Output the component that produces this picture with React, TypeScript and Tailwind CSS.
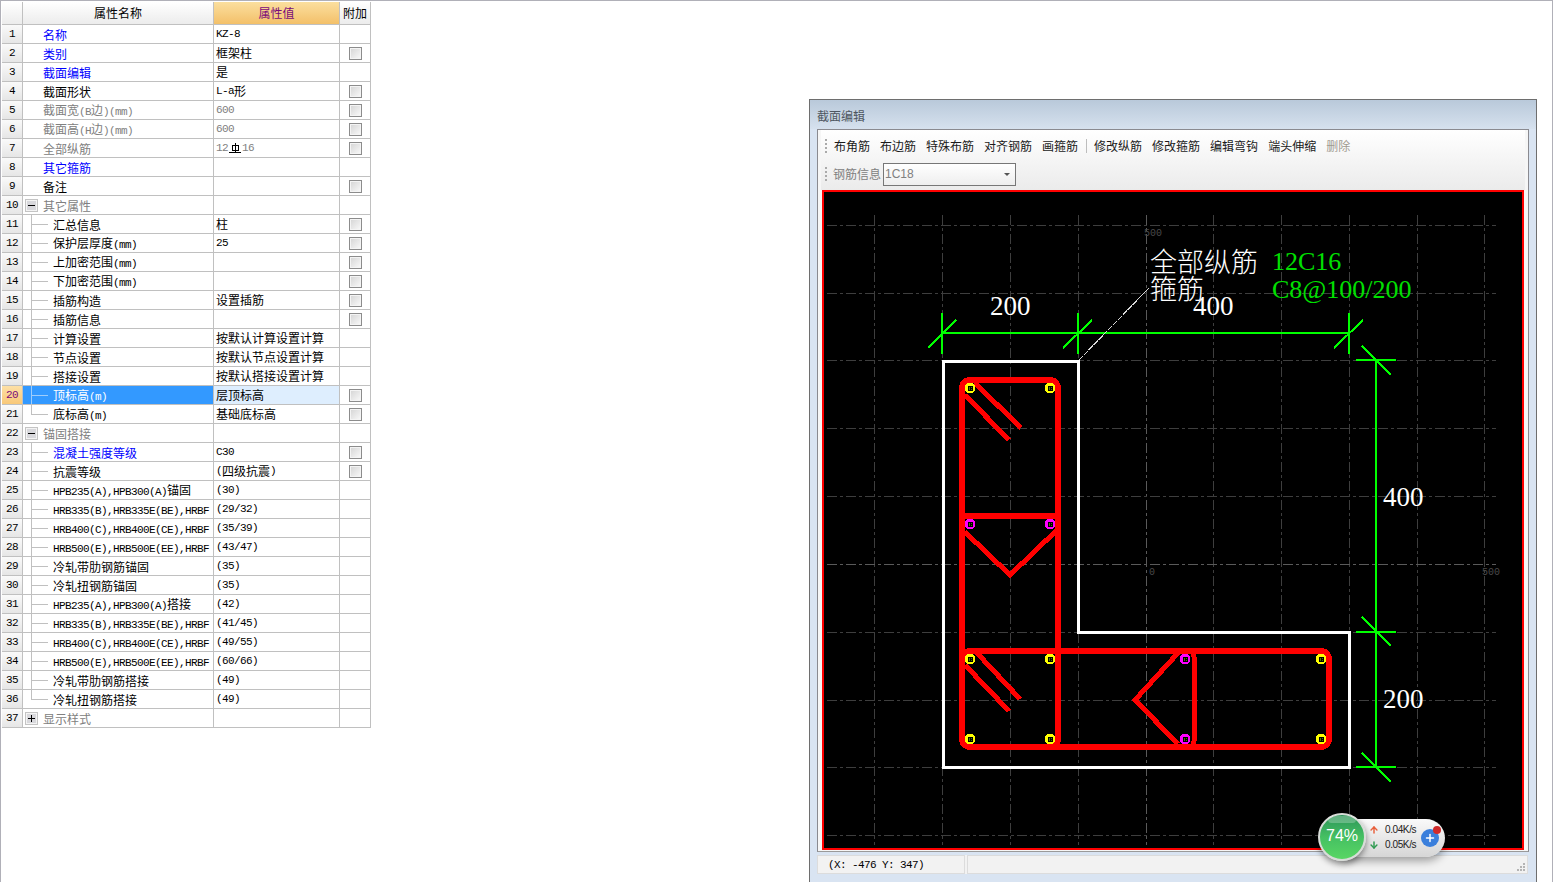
import { ArrowDown, ArrowUp, Plus } from "lucide-react"

interface Row {
    name: string
    value?: string
    check?: boolean
    color?: "blue" | "gray"
    valueGray?: boolean
    tree?: "tee" | "last"
    group?: "minus" | "plus"
    selected?: boolean
    rebar?: boolean
}

const rows: Row[] = [
    { name: "名称", value: "KZ-8", color: "blue" },
    { name: "类别", value: "框架柱", check: true, color: "blue" },
    { name: "截面编辑", value: "是", color: "blue" },
    { name: "截面形状", value: "L-a形", check: true },
    { name: "截面宽(B边)(mm)", value: "600", check: true, color: "gray", valueGray: true },
    { name: "截面高(H边)(mm)", value: "600", check: true, color: "gray", valueGray: true },
    { name: "全部纵筋", check: true, color: "gray", valueGray: true, rebar: true },
    { name: "其它箍筋", color: "blue" },
    { name: "备注", check: true },
    { name: "其它属性", color: "gray", group: "minus" },
    { name: "汇总信息", value: "柱", check: true, tree: "tee" },
    { name: "保护层厚度(mm)", value: "25", check: true, tree: "tee" },
    { name: "上加密范围(mm)", check: true, tree: "tee" },
    { name: "下加密范围(mm)", check: true, tree: "tee" },
    { name: "插筋构造", value: "设置插筋", check: true, tree: "tee" },
    { name: "插筋信息", check: true, tree: "tee" },
    { name: "计算设置", value: "按默认计算设置计算", tree: "tee" },
    { name: "节点设置", value: "按默认节点设置计算", tree: "tee" },
    { name: "搭接设置", value: "按默认搭接设置计算", tree: "tee" },
    { name: "顶标高(m)", value: "层顶标高", check: true, tree: "tee", selected: true },
    { name: "底标高(m)", value: "基础底标高", check: true, tree: "last" },
    { name: "锚固搭接", color: "gray", group: "minus" },
    { name: "混凝土强度等级", value: "C30", check: true, tree: "tee", color: "blue" },
    { name: "抗震等级", value: "(四级抗震)", check: true, tree: "tee" },
    { name: "HPB235(A),HPB300(A)锚固", value: "(30)", tree: "tee" },
    { name: "HRB335(B),HRB335E(BE),HRBF", value: "(29/32)", tree: "tee" },
    { name: "HRB400(C),HRB400E(CE),HRBF", value: "(35/39)", tree: "tee" },
    { name: "HRB500(E),HRB500E(EE),HRBF", value: "(43/47)", tree: "tee" },
    { name: "冷轧带肋钢筋锚固", value: "(35)", tree: "tee" },
    { name: "冷轧扭钢筋锚固", value: "(35)", tree: "tee" },
    { name: "HPB235(A),HPB300(A)搭接", value: "(42)", tree: "tee" },
    { name: "HRB335(B),HRB335E(BE),HRBF", value: "(41/45)", tree: "tee" },
    { name: "HRB400(C),HRB400E(CE),HRBF", value: "(49/55)", tree: "tee" },
    { name: "HRB500(E),HRB500E(EE),HRBF", value: "(60/66)", tree: "tee" },
    { name: "冷轧带肋钢筋搭接", value: "(49)", tree: "tee" },
    { name: "冷轧扭钢筋搭接", value: "(49)", tree: "last" },
    { name: "显示样式", color: "gray", group: "plus" },
]

const toolsA = ["布角筋", "布边筋", "特殊布筋", "对齐钢筋", "画箍筋"]
const toolsB = ["修改纵筋", "修改箍筋", "编辑弯钩", "端头伸缩"]

const gridX = [874, 942, 1010, 1078, 1146, 1213, 1281, 1349, 1417, 1484]
const gridY = [225, 293, 360, 428, 496, 564, 632, 700, 767, 835]

// SimSun latin is half width, squeezed 11px mono gives the same 6px advance
function Txt({ s }: { s: string }) {
    return (
        <>
            {s.split(/([\x00-\x7f]+)/).filter(Boolean).map((part, i) =>
                /^[\x00-\x7f]/.test(part) ? (
                    <span key={i} className="font-['Liberation_Mono',monospace] text-[11px] tracking-[-0.6px]">{part}</span>
                ) : (
                    <span key={i}>{part}</span>
                )
            )}
        </>
    )
}

function Check() {
    return (
        <div className="w-[13px] h-[13px] border border-[#8c8c8c] bg-gradient-to-br from-[#d4d4d4] to-[#fafafa] outline outline-1 -outline-offset-2 outline-[#f4f4f4]"></div>
    )
}

function TreeToggle({ kind }: { kind: "minus" | "plus" }) {
    return (
        <svg width="13" height="13" viewBox="0 0 13 13" className="ml-[2px] mr-[5px] shrink-0" shapeRendering="crispEdges">
            <rect x="0.5" y="0.5" width="12" height="12" fill="#f4f4f4" stroke="#c4c4c4" />
            <rect x="2" y="2" width="9" height="9" fill="#d8d8dc" />
            <rect x="3" y="6" width="7" height="1" fill="#000" />
            {kind === "plus" && <rect x="6" y="3" width="1" height="7" fill="#000" />}
        </svg>
    )
}

function RebarSign() {
    return (
        <svg width="12" height="12" viewBox="0 0 12 12" className="mx-[1px] shrink-0" shapeRendering="crispEdges">
            <path d="M3 3H9V8H3ZM6 1V11M0 10H12" fill="none" stroke="#000" />
        </svg>
    )
}

function PropertyTable() {
    return (
        <div className="w-[369px] mt-[1px] ml-[1px] shrink-0 text-[12px] text-black">
            <div className="flex h-[23px] border-b border-[#c0c0c0]">
                <div className="w-[21px] border-r border-[#c0c0c0] bg-gradient-to-b from-white to-[#ececec]"></div>
                <div className="w-[191px] border-r border-[#c0c0c0] bg-gradient-to-b from-white to-[#ececec] flex items-center justify-center">属性名称</div>
                <div className="w-[126px] border-r border-[#c0c0c0] bg-gradient-to-b from-[#fbdf9e] to-[#f3c069] flex items-center justify-center text-[#7a0a7a]">属性值</div>
                <div className="w-[31px] border-r border-[#c0c0c0] bg-gradient-to-b from-white to-[#ececec] flex items-center justify-center">附加</div>
            </div>
            {rows.map((row, i) => (
                <div key={i} className="flex h-[19px] border-b border-[#c0c0c0] leading-[18px]">
                    <div className={`w-[21px] shrink-0 border-r border-[#c0c0c0] flex items-center justify-center ${row.selected ? "bg-gradient-to-b from-[#fde0a6] to-[#f8c878] text-[#7a0a7a]" : "bg-gradient-to-b from-[#fafafa] to-[#e6e6e6]"}`}>
                        <span className="font-['Liberation_Mono',monospace] text-[11px] tracking-[-0.6px]">{i + 1}</span>
                    </div>
                    <div className={`w-[191px] shrink-0 border-r border-[#c0c0c0] flex items-center ${row.selected ? "bg-[#3399ff] text-white" : row.color === "blue" ? "text-[#0000ff]" : row.color === "gray" ? "text-[#808080]" : ""}`}>
                        {row.group && <TreeToggle kind={row.group} />}
                        {row.tree === "tee" && (
                            <div className={`ml-[8px] w-[17px] self-stretch border-l ${row.selected ? "border-[#9fcdfb]" : "border-[#c0c0c0]"}`}>
                                <div className={`mt-[9px] h-px ${row.selected ? "bg-[#9fcdfb]" : "bg-[#c0c0c0]"}`}></div>
                            </div>
                        )}
                        {row.tree === "last" && <div className="ml-[8px] w-[17px] h-[10px] self-start border-l border-b border-[#c0c0c0]"></div>}
                        <div className={`whitespace-nowrap pt-px ${row.tree ? "ml-[5px]" : row.group ? "" : "ml-[20px]"}`}>
                            <Txt s={row.name} />
                        </div>
                    </div>
                    <div className={`w-[126px] shrink-0 border-r border-[#c0c0c0] pl-[2px] flex items-center whitespace-nowrap ${row.selected ? "bg-[#deeefe]" : ""} ${row.valueGray ? "text-[#808080]" : ""}`}>
                        {row.rebar ? (
                            <>
                                <Txt s="12" />
                                <RebarSign />
                                <Txt s="16" />
                            </>
                        ) : (
                            row.value && <Txt s={row.value} />
                        )}
                    </div>
                    <div className="w-[31px] shrink-0 border-r border-[#c0c0c0] flex items-center justify-center">
                        {row.check && <Check />}
                    </div>
                </div>
            ))}
        </div>
    )
}

function Bar({ x, y, color }: { x: number; y: number; color: string }) {
    return (
        <g>
            <circle cx={x} cy={y} r="5.5" fill={color} />
            <rect x={x - 2} y={y - 2} width="5" height="5" fill="#000" />
            <rect x={x - 1} y={y - 1} width="1" height="3" fill="#4a7a00" />
            <rect x={x + 1} y={y - 1} width="1" height="1" fill="#4a7a00" />
            <rect x={x + 1} y={y + 1} width="1" height="1" fill="#4a7a00" />
        </g>
    )
}

function Drawing() {
    const dash = "10 3 3 3"
    return (
        <svg width="698" height="656" viewBox="824 192 698 656" className="block bg-black" shapeRendering="crispEdges">
            {/* axis grid */}
            {gridX.map((x) => (
                <line key={x} x1={x} y1="215" x2={x} y2="845" stroke={x === 1146 ? "#5a5a5a" : "#3e3e3e"} strokeDasharray={dash} />
            ))}
            {gridY.map((y) => (
                <line key={y} x1="827" y1={y} x2="1496" y2={y} stroke={y === 564 ? "#5a5a5a" : "#3e3e3e"} strokeDasharray={dash} />
            ))}
            <g fontFamily="'Liberation Mono', monospace" fontSize="10" fill="#4a4a4a">
                <text x="1144" y="236">500</text>
                <text x="1482" y="575">500</text>
                <text x="1149" y="575">0</text>
            </g>

            {/* section outline */}
            <path d="M943.5 361.5H1078.5V632.5H1349.5V767.5H943.5Z" fill="none" stroke="#fff" strokeWidth="3" />

            {/* stirrups */}
            <g fill="none" stroke="#ff0000">
                <rect x="962" y="380" width="96" height="367" rx="8" strokeWidth="6" />
                <rect x="962" y="651" width="367" height="96" rx="8" strokeWidth="6" />
                <path d="M962 516H1058" strokeWidth="6" />
                <path d="M975 383L1021 428M965 395L1009 440M965 532L1010 575L1057 530" strokeWidth="5" />
                <path d="M977 653L1020 699M965 665L1009 711M1178 653L1135 700L1178 744" strokeWidth="5" />
                <path d="M1180 651H1188Q1194 651 1194 657V741Q1194 747 1188 747H1180" strokeWidth="5" />
            </g>

            {/* bars */}
            <Bar x={970} y={388} color="#ffff00" />
            <Bar x={1050} y={388} color="#ffff00" />
            <Bar x={970} y={524} color="#ff00ff" />
            <Bar x={1050} y={524} color="#ff00ff" />
            <Bar x={970} y={659} color="#ffff00" />
            <Bar x={1050} y={659} color="#ffff00" />
            <Bar x={970} y={739} color="#ffff00" />
            <Bar x={1050} y={739} color="#ffff00" />
            <Bar x={1185} y={659} color="#ff00ff" />
            <Bar x={1185} y={739} color="#ff00ff" />
            <Bar x={1321} y={659} color="#ffff00" />
            <Bar x={1321} y={739} color="#ffff00" />

            {/* dimensions */}
            <g fill="none" stroke="#00ff00" strokeWidth="2">
                <path d="M942 333H1349M942 313V354M1078 313V354M1349 313V354" />
                <path d="M928 348L956 320M1063 348L1092 320M1334 348L1363 320" />
                <path d="M1376 360V767M1356 360H1396M1356 632H1396M1356 767H1396" />
                <path d="M1362 346L1391 375M1362 617L1391 646M1362 753L1391 782" />
            </g>
            <line x1="1079" y1="360" x2="1149" y2="288" stroke="#d8d8d8" strokeDasharray="6 1" />

            <g fontFamily="'Liberation Serif', serif" fontSize="27" fill="#fff">
                <text x="990" y="315">200</text>
                <text x="1193" y="315">400</text>
                <text x="1383" y="506">400</text>
                <text x="1383" y="708">200</text>
            </g>
            <g fontFamily="'Noto Sans CJK SC', sans-serif" fontSize="27" fontWeight="300" fill="#fff" shapeRendering="auto">
                <text x="1150" y="272">全部纵筋</text>
                <text x="1150" y="299">箍筋</text>
            </g>
            <g fontFamily="'Liberation Serif', serif" fontSize="26" fill="#00e000">
                <text x="1272" y="270">12C16</text>
                <text x="1272" y="298">C8@100/200</text>
            </g>
        </svg>
    )
}

function NetMeter() {
    return (
        <div className="absolute left-[1317px] top-[812px] w-[127px] h-[48px]">
            <div className="absolute left-[25px] top-[6px] w-[102px] h-[38px] rounded-r-[19px] bg-gradient-to-b from-[#fafafa] to-[#d6d6d6] shadow-[0_4px_8px_rgba(0,0,0,0.35)] flex items-center">
                <div className="ml-[26px] -mt-[2px] flex flex-col gap-[2px] text-[10px] leading-[13px] font-['Liberation_Sans',sans-serif] text-[#222]">
                    <div className="flex items-center gap-[6px]">
                        <ArrowUp size={10} strokeWidth={3.5} className="text-[#e8603c]" />
                        <span className="tracking-[-0.4px]">0.04K/s</span>
                    </div>
                    <div className="flex items-center gap-[6px]">
                        <ArrowDown size={10} strokeWidth={3.5} className="text-[#2e9a50]" />
                        <span className="tracking-[-0.4px]">0.05K/s</span>
                    </div>
                </div>
                <div className="relative ml-[5px] w-[18px] h-[18px] rounded-full bg-[#3a7fdc] flex items-center justify-center">
                    <Plus size={12} strokeWidth={3} className="text-white" />
                    <div className="absolute -top-[3px] -right-[2px] w-[8px] h-[8px] rounded-full bg-[#d02a2a]"></div>
                </div>
            </div>
            <div className="absolute left-0 top-0 w-[48px] h-[48px] rounded-full border-2 border-[#d8dcd8] bg-gradient-to-b from-[#2c9458] via-[#45c062] to-[#58d664] shadow-[0_3px_6px_rgba(0,0,0,0.45)] flex items-center justify-center">
                <div className="absolute top-[1px] left-[8px] w-[28px] h-[7px] rounded-full bg-white/25"></div>
                <span className="-mt-[2px] text-white text-[16px] font-['Liberation_Sans',sans-serif]">74%</span>
            </div>
        </div>
    )
}

function SectionWindow() {
    return (
        <div className="ml-[438px] mt-[98px] w-[728px] h-[790px] shrink-0 border border-[#6e6e6e] bg-[#d9e4f2] text-[12px] flex flex-col">
            <div className="h-[29px] shrink-0 bg-gradient-to-b from-[#b9c9da] to-[#d6e1ee] pl-[7px] pt-[2px] flex items-center text-[#4e5660]">截面编辑</div>
            <div className="ml-[7px] w-[712px] h-[723px] shrink-0 border border-[#8a8a90] border-b-[#9a9a9a] bg-[#f6f6f6] px-[3px]">
                <div className="h-[60px] bg-gradient-to-b from-white to-[#ebebeb] pl-[4px]">
                    <div className="h-[30px] pt-[2px] flex items-center">
                        <div className="h-[14px] border-l-2 border-dotted border-[#aaaaaa]"></div>
                        <div className="ml-[7px] flex gap-[10px] text-[#1a1a1a]">
                            {toolsA.map((t) => <span key={t}>{t}</span>)}
                        </div>
                        <div className="ml-[8px] mr-[7px] w-px h-[14px] bg-[#bdbdbd]"></div>
                        <div className="flex gap-[10px] text-[#1a1a1a]">
                            {toolsB.map((t) => <span key={t}>{t}</span>)}
                            <span className="text-[#a09a90]">删除</span>
                        </div>
                    </div>
                    <div className="h-[28px] flex items-center">
                        <div className="h-[14px] border-l-2 border-dotted border-[#aaaaaa]"></div>
                        <span className="ml-[6px] text-[#808080]">钢筋信息</span>
                        <div className="ml-[2px] w-[133px] h-[23px] border border-[#777777] bg-gradient-to-b from-white to-[#eeeeee] pl-[1px] pr-[5px] flex items-center justify-between font-['Liberation_Sans',sans-serif] text-[#808080]">
                            <span>1C18</span>
                            <div className="w-0 h-0 border-x-[3px] border-x-transparent border-t-[3px] border-t-[#555555]"></div>
                        </div>
                    </div>
                </div>
                <div className="ml-px w-[702px] h-[660px] border-2 border-[#ff0000]">
                    <Drawing />
                </div>
            </div>
            <div className="mt-[3px] ml-[7px] w-[711px] h-[19px] shrink-0 flex gap-[2px] bg-[#f2f2f2]">
                <div className="w-[148px] border border-[#dcdcdc] pl-[10px] pt-px flex items-center whitespace-pre">
                    <Txt s="(X: -476 Y: 347)" />
                </div>
                <div className="flex-1 border border-[#dcdcdc] flex items-end justify-end pr-px pb-px">
                    <svg width="10" height="10" viewBox="0 0 10 10" shapeRendering="crispEdges">
                        <path d="M7 1h2v2H7ZM4 4h2v2H4ZM7 4h2v2H7ZM1 7h2v2H1ZM4 7h2v2H4ZM7 7h2v2H7Z" fill="#b4b4b4" />
                    </svg>
                </div>
            </div>
        </div>
    )
}

export default function App() {
    return (
        <div className="relative flex w-[1553px] h-[882px] overflow-hidden bg-white border-t border-x border-[#b0b0b8] font-['Noto_Sans_CJK_SC',sans-serif]">
            <PropertyTable />
            <SectionWindow />
            <NetMeter />
        </div>
    )
}
